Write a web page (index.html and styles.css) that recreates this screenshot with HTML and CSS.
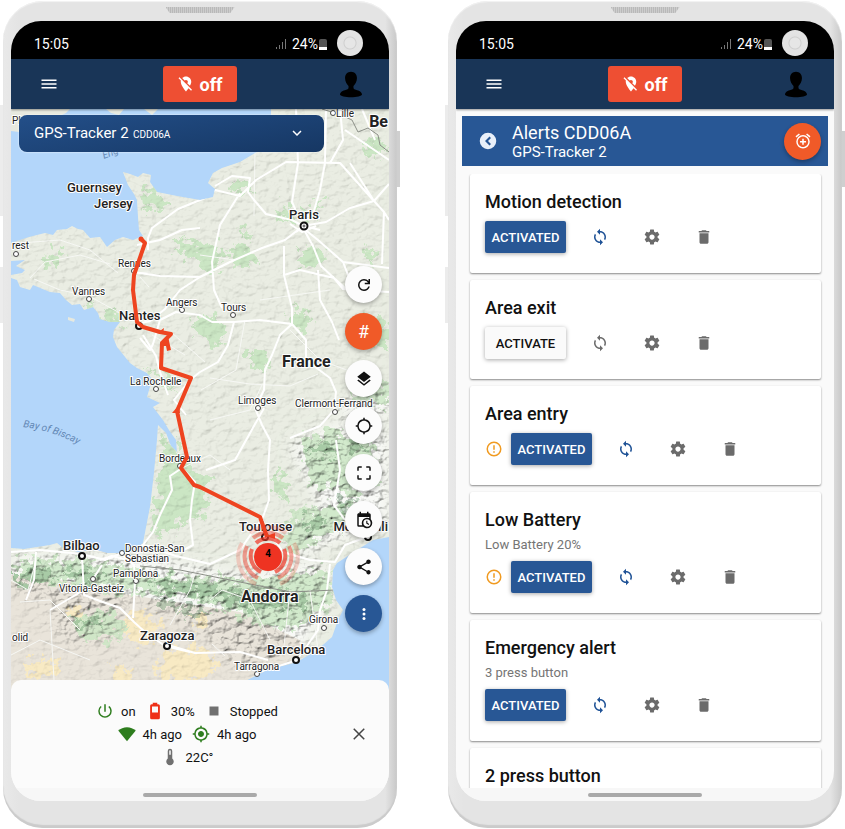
FILE: index.html
```html
<!doctype html>
<html lang="en">
<head>
    <meta charset="utf-8">
    <meta name="viewport" content="width=device-width, initial-scale=1">
    <title>GPS-Tracker</title>
    <link rel="stylesheet" href="styles.css">
</head>
<body>

<!-- icon sprite -->
<svg class="sprite" width="0" height="0" aria-hidden="true">
    <symbol id="i-menu" viewBox="0 0 24 24"><path d="M2 6h20v2H2zM2 11h20v2H2zM2 16h20v2H2z"/></symbol>
    <symbol id="i-location-off" viewBox="0 0 24 24"><path d="M12 6.500c1.380 0 2.500 1.120 2.500 2.500 0 .74-.33 1.390-.83 1.850l3.630 3.630c.98-1.860 1.700-3.800 1.700-5.480 0-3.870-3.130-7-7-7-1.980 0-3.760.83-5.040 2.150l3.190 3.190c.46-.52 1.110-.84 1.850-.84zm4.370 9.600l-4.630-4.630-.11-.11L3.270 3 2 4.270l3.180 3.180C5.070 7.950 5 8.470 5 9c0 5.250 7 13 7 13s1.670-1.850 3.380-4.350L18.730 21 20 19.730l-3.630-3.630z"/></symbol>
    <symbol id="i-user" viewBox="0 0 24 28"><path d="M12 0c4 0 6.500 3 6.500 7 0 4-2 7-3.800 8.600v2c0 1 1 1.700 2.600 2.200C21 21 24 22.300 24 25c0 1.500-6 3-12 3S0 26.500 0 25c0-2.700 3-4 6.700-5.200 1.600-.5 2.600-1.200 2.600-2.200v-2C7.500 14 5.500 11 5.500 7c0-4 2.500-7 6.500-7z"/></symbol>
    <symbol id="i-signal" viewBox="0 0 12 12"><path d="M0 9h1v2H0zM3 7h1v4H3zM6 4h1v7H6zM9 1h1v10H9z"/></symbol>
    <symbol id="i-chevron" viewBox="0 0 24 24"><path d="M7.410 8.590L12 13.170l4.590-4.580L18 10l-6 6-6-6z"/></symbol>
    <symbol id="i-refresh" viewBox="0 0 24 24"><path d="M12 20q-3.350 0-5.675-2.325Q4 15.350 4 12q0-3.350 2.325-5.675Q8.650 4 12 4q1.725 0 3.300.713 1.575.712 2.700 2.037V4h2v7h-7V9h4.200q-.8-1.400-2.188-2.200Q13.625 6 12 6 9.500 6 7.750 7.750T6 12q0 2.500 1.750 4.250T12 18q1.925 0 3.475-1.100T17.650 14h2.100q-.7 2.650-2.850 4.325Q14.750 20 12 20Z"/></symbol>
    <symbol id="i-layers" viewBox="0 0 24 24"><path d="M11.990 18.540l-7.370-5.730L3 14.070l9 7 9-7-1.630-1.270-7.380 5.740zM12 16l7.360-5.730L21 9l-9-7-9 7 1.630 1.270L12 16z"/></symbol>
    <symbol id="i-search-pos" viewBox="0 0 24 24"><path d="M20.940 11A8.994 8.994 0 0 0 13 3.060V1h-2v2.060A8.994 8.994 0 0 0 3.060 11H1v2h2.060A8.994 8.994 0 0 0 11 20.940V23h2v-2.060A8.994 8.994 0 0 0 20.940 13H23v-2h-2.060zM12 19c-3.870 0-7-3.130-7-7s3.130-7 7-7 7 3.130 7 7-3.130 7-7 7z"/></symbol>
    <symbol id="i-expand" viewBox="0 0 24 24"><path d="M3 9V5q0-2 2-2h4v2H5v4zM15 3h4q2 0 2 2v4h-2V5h-4zM3 15h2v4h4v2H5q-2 0-2-2zM19 15h2v4q0 2-2 2h-4v-2h4z"/></symbol>
    <symbol id="i-calendar" viewBox="0 0 24 24"><path d="M15 13h1.500v2.820l2.440 1.410-.75 1.300L15 16.690V13m4-5H5v11h4.670c-.43-.91-.67-1.930-.67-3a7 7 0 0 1 7-7c1.070 0 2.090.24 3 .67V8M5 21a2 2 0 0 1-2-2V5c0-1.110.89-2 2-2h1V1h2v2h8V1h2v2h1a2 2 0 0 1 2 2v6.100c1.240 1.260 2 2.990 2 4.900a7 7 0 0 1-7 7c-1.910 0-3.640-.76-4.900-2H5m11-9.850A4.850 4.850 0 0 0 11.150 16c0 2.680 2.170 4.850 4.850 4.850A4.850 4.850 0 0 0 20.850 16c0-2.680-2.170-4.850-4.850-4.850z"/></symbol>
    <symbol id="i-share" viewBox="0 0 24 24"><path d="M18 16.080c-.76 0-1.440.3-1.960.77L8.910 12.700c.05-.23.09-.46.09-.7s-.04-.47-.09-.7l7.050-4.110c.54.5 1.250.81 2.040.81 1.660 0 3-1.340 3-3s-1.340-3-3-3-3 1.340-3 3c0 .24.04.47.09.7L8.040 9.810C7.500 9.310 6.790 9 6 9c-1.660 0-3 1.340-3 3s1.340 3 3 3c.79 0 1.500-.31 2.040-.81l7.120 4.160c-.05.21-.08.43-.08.65 0 1.610 1.310 2.920 2.920 2.920s2.920-1.310 2.920-2.920-1.310-2.920-2.920-2.920z"/></symbol>
    <symbol id="i-more" viewBox="0 0 24 24"><circle cx="12" cy="6" r="2"/><circle cx="12" cy="12" r="2"/><circle cx="12" cy="18" r="2"/></symbol>
    <symbol id="i-power" viewBox="0 0 24 24"><path d="M13 3h-2v10h2V3zm4.830 2.170l-1.420 1.420A6.920 6.920 0 0 1 19 12c0 3.870-3.130 7-7 7s-7-3.130-7-7c0-2.190 1.010-4.140 2.580-5.420L6.170 5.170A8.932 8.932 0 0 0 3 12a9 9 0 0 0 18 0c0-2.740-1.230-5.180-3.170-6.830z"/></symbol>
    <symbol id="i-battery" viewBox="0 0 24 24"><path fill-rule="evenodd" d="M9 1h6v2h1.500Q18.500 3 18.500 5v16q0 2-2 2h-9q-2 0-2-2V5q0-2 2-2H9zM8 6v8h8V6z"/></symbol>
    <symbol id="i-stop" viewBox="0 0 24 24"><path d="M6 6h12v12H6z"/></symbol>
    <symbol id="i-wifi" viewBox="0 0 24 24"><path d="M12 3C7.500 3 3.400 4.700.3 7.300L12 21.500 23.700 7.300C20.600 4.700 16.500 3 12 3z"/></symbol>
    <symbol id="i-gps" viewBox="0 0 24 24"><path d="M12 8c-2.210 0-4 1.790-4 4s1.790 4 4 4 4-1.790 4-4-1.790-4-4-4zm8.940 3A8.994 8.994 0 0 0 13 3.060V1h-2v2.060A8.994 8.994 0 0 0 3.060 11H1v2h2.060A8.994 8.994 0 0 0 11 20.940V23h2v-2.060A8.994 8.994 0 0 0 20.940 13H23v-2h-2.060zM12 19c-3.870 0-7-3.130-7-7s3.130-7 7-7 7 3.130 7 7-3.130 7-7 7z"/></symbol>
    <symbol id="i-thermo" viewBox="0 0 24 24"><path fill-rule="evenodd" d="M15 14V4a3 3 0 0 0-6 0v10a5 5 0 1 0 6 0zM11 9V4a1 1 0 0 1 2 0v5z"/></symbol>
    <symbol id="i-close" viewBox="0 0 24 24"><path d="M5 5l14 14M19 5L5 19" fill="none" stroke="currentColor" stroke-width="2"/></symbol>
    <symbol id="i-back" viewBox="0 0 24 24"><path fill-rule="evenodd" d="M12 1a11 11 0 1 0 0 22 11 11 0 0 0 0-22zM14 6l2 2-4 4 4 4-2 2-6-6z"/></symbol>
    <symbol id="i-alarm-add" viewBox="0 0 24 24"><path d="M7.880 3.390L6.600 1.860 2 5.710l1.290 1.530 4.590-3.850zM22 5.720l-4.600-3.860-1.290 1.530 4.600 3.860L22 5.720zM12 4a9 9 0 1 0 0 18 9 9 0 0 0 0-18zm0 16c-3.870 0-7-3.130-7-7s3.130-7 7-7 7 3.130 7 7-3.130 7-7 7zm1-11h-2v3H8v2h3v3h2v-3h3v-2h-3V9z"/></symbol>
    <symbol id="i-sync" viewBox="0 0 24 24"><path d="M12 4V1L8 5l4 4V6c3.310 0 6 2.690 6 6 0 1.010-.25 1.970-.7 2.800l1.460 1.460A7.930 7.930 0 0 0 20 12c0-4.420-3.580-8-8-8zm0 14c-3.310 0-6-2.690-6-6 0-1.010.25-1.970.7-2.800L5.240 7.740A7.930 7.930 0 0 0 4 12c0 4.420 3.580 8 8 8v3l4-4-4-4v3z"/></symbol>
    <symbol id="i-settings" viewBox="0 0 24 24"><path d="M19.430 12.980c.04-.32.07-.64.07-.98s-.03-.66-.07-.98l2.110-1.650c.19-.15.24-.42.12-.64l-2-3.460c-.12-.22-.39-.3-.61-.22l-2.490 1c-.52-.4-1.080-.73-1.690-.98l-.38-2.650C14.460 2.180 14.250 2 14 2h-4c-.25 0-.46.18-.49.42l-.38 2.650c-.61.25-1.170.59-1.690.98l-2.490-1c-.23-.09-.49 0-.61.22l-2 3.460c-.13.22-.07.49.12.64l2.110 1.650c-.04.32-.07.65-.07.98s.03.66.07.98l-2.110 1.650c-.19.15-.24.42-.12.64l2 3.460c.12.22.39.3.61.22l2.490-1c.52.4 1.080.73 1.690.98l.38 2.650c.03.24.24.42.49.42h4c.25 0 .46-.18.49-.42l.38-2.650c.61-.25 1.170-.59 1.690-.98l2.490 1c.23.09.49 0 .61-.22l2-3.460c.12-.22.07-.49-.12-.64l-2.110-1.650zM12 15.500c-1.930 0-3.500-1.570-3.500-3.500s1.570-3.500 3.500-3.500 3.500 1.570 3.500 3.500-1.570 3.500-3.500 3.500z"/></symbol>
    <symbol id="i-delete" viewBox="0 0 24 24"><path d="M6 19c0 1.100.9 2 2 2h8c1.100 0 2-.9 2-2V7H6v12zM19 4h-3.500l-1-1h-5l-1 1H5v2h14V4z"/></symbol>
    <symbol id="i-warning" viewBox="0 0 24 24"><path d="M11 15h2v2h-2zm0-8h2v6h-2zm1-5a10 10 0 1 0 0 20 10 10 0 0 0 0-20zm0 18a8 8 0 1 1 0-16 8 8 0 0 1 0 16z"/></symbol>
</svg>

<main class="phones">

    <!-- map view -->
    <section class="phone">
        <div class="speaker"></div>
        <div class="screen">
            <div class="statusbar">
                <span>15:05</span>
                <svg class="signal"><use href="#i-signal"/></svg>
                <span>24%</span>
                <span class="cell"></span>
                <span class="camera"></span>
            </div>
            <header class="topbar">
                <button class="bar-btn" aria-label="Menu"><svg class="icon"><use href="#i-menu"/></svg></button>
                <button class="off-btn"><svg class="icon"><use href="#i-location-off"/></svg>off</button>
                <button class="bar-btn bar-user" aria-label="Account"><svg class="user"><use href="#i-user"/></svg></button>
            </header>

            <div class="map">
                <svg class="map-canvas" viewBox="11 109 378 581" preserveAspectRatio="xMidYMid slice">
                    <defs>
                        <filter id="relief" x="0" y="0" width="100%" height="100%">
                            <feTurbulence type="fractalNoise" baseFrequency=".11 .16" numOctaves="4" seed="8" result="n"/>
                            <feDiffuseLighting in="n" surfaceScale="5" diffuseConstant="1.200" lighting-color="#fff" result="l"><feDistantLight azimuth="225" elevation="56"/></feDiffuseLighting>
                            <feGaussianBlur in="SourceGraphic" stdDeviation="7" result="s"/>
                            <feComposite in="l" in2="s" operator="in"/>
                        </filter>
                        <filter id="patchy" x="-10%" y="-10%" width="120%" height="120%">
                            <feTurbulence type="fractalNoise" baseFrequency=".12" numOctaves="4" seed="3"/>
                            <feDisplacementMap in="SourceGraphic" scale="28" xChannelSelector="R" yChannelSelector="G"/>
                        </filter>
                        <path id="land" d="M257 152L240 162 222 168 213 173 208 183 215 189 213 197 200 200 177 196 157 192 150 182 151 175 143 173 138 177 130 174 123 172 128 185 134 194 137 200 138 217 139 230 143 236 133 240 123 237 115 240 107 247 100 237 90 238 83 230 78 229 72 226 67 229 57 230 53 235 45 233 37 235 29 237 20 240 11 243V261L25 260 16 266 25 270 22 273 11 275V278L17 280 20 287 30 290 33 285 50 292 60 293 66 300 72 305 80 304 84 310 93 307 98 313 100 319 110 322 120 322 114 330 113 337 117 347 130 363 137 368 147 373 153 380 150 387 147 397 160 403 153 407 163 420 169 430 176 440 177 452 171 446 166 433 158 425 157 440 154 473 150 507 143 543 133 552 120 553 107 553 100 551 90 550 78 552 63 548 57 543 50 545 37 547 24 549 11 548V690H240L247 680 267 670 297 662 317 650 332 637 338 620 343 610 336 600 332 587 333 570 337 563 357 550 373 540 389 537V109H271V132L266 145Z"/>
                        <clipPath id="onland"><use href="#land"/></clipPath>
                        <path id="biscay" d="M23 427Q56 431 82 447"/>
                    </defs>

                    <rect x="11" y="109" width="378" height="581" fill="#b3d6fa"/>
                    <path fill="#e7e9df" d="M11 109H70L66 113 50 121 30 127 19 132 11 131ZM106 109H124L119 115 111 113ZM144 109H158L152 115ZM68 317L75 319 74 322 68 320Z"/>
                    <use href="#land" fill="#e7ebdf"/>

                    <g clip-path="url(#onland)">
                        <path fill="#e9e4da" d="M11 575L60 580 130 595 240 612 300 640 300 690H11Z"/>
                        <g fill="#f8eac4" filter="url(#patchy)">
                            <path d="M22 660h36v16H26zM122 618l26-6 14 16-18 18-20-10zM158 656l40-12 24 22-28 16-34-4zM66 604l16 5 4 14-18-5zM188 614l14-2 6 12-14 6zM112 664l16 3 3 14-16 3z"/>
                        </g>
                        <g fill="#cbe6c4" filter="url(#patchy)">
                            <path d="M164 438L186 458 208 482 204 515 156 536 152 534zM141 192l15-4 10 14-14 10-10-4zM174 240l28 2 10 12-20 4-18-8zM199 244l20 2 5 16-14 12-14-8zM226 248l22-3 8 20-20 3zM299 249l20-2 8 14-16 8-12-8zM278 208l26 2-2 12-20-4zM311 204l14-4-6 16-8-4zM232 180l20 4v10l-22-4zM192 318l24-2 12 14-10 14-22-10zM249 350l18 2-2 20-16-6zM292 306l18 6-6 22-14-8zM49 252l14 2-8 16-14-8zM99 311h18l10 10-20 4zM84 300l12 4-4 8zM144 370l24 6 8 14-14-4zM364 247l14 8-10 10zM362 142l14-4 14 12-14 10zM274 470l14 4-4 26-10-6zM234 234l10-8 4 10zM366 316l24 8v24l-22-4z"/>
                            <path d="M14 560L104 562 154 574 244 580 330 570 334 600 294 630 264 625 184 594 104 590 14 580zM66 618l40-6 24 14-20 16-30-6zM300 440l30-10 44 12 6 40-30 10-40-8zM296 510l44-6 30 10-30 16-44 22-14-8zM350 392l39-14v26l-30 4zM300 590l26-4-4 26-20 4z" opacity=".85"/>
                        </g>
                        <g fill="#4f8a58" opacity=".32" filter="url(#patchy)">
                            <path d="M14 572l30-4 14 8-20 8-24 0zM60 570l36-2 10 10-40 4zM148 576l50 8 60 10 42 2 14 8-54 6-60-14-50-8zM158 596l24 8 30 6-10 8-40-12zM72 620l26-2 10 10-30-4zM306 446l24-6 10 12-26 6zM336 500l20-4 8 8-24 8zM300 520l20-4 6 8-22 6zM350 436l18 4-4 14-14-6z"/>
                        </g>
                        <path d="M11 556H140L240 574 320 562 330 600 300 650 240 670 200 630 130 595 110 640 60 640 50 600 11 590ZM290 445L330 425 389 430V530L350 535 300 555 285 535 320 505ZM340 405L389 380V420L345 420Z" fill="#fff" filter="url(#relief)" style="mix-blend-mode:multiply" opacity=".7"/>
                        <rect x="11" y="109" width="378" height="581" fill="#fff" filter="url(#relief)" style="mix-blend-mode:multiply" opacity=".14"/>

                        <g class="road-minor">
                            <path d="M20 243L60 240 90 250 118 273M30 278L45 262 80 255 110 264M34 279L60 290 89 296 118 312 137 322M133 273L150 272M140 277L149 287M254 216L255 150M201 390L236 370 245 320M210 378L250 384 290 386 318 374M290 330L320 360 360 375M340 400L389 407M262 385L250 410 210 420M230 470L210 455 182 468M80 630L50 600 20 602M50 610L54 680M11 655L40 640 90 660M210 600L222 590 250 600 270 640M212 644L225 656M170 625L190 590 196 570M260 300L330 290M235 260L200 255M152 335L185 355M172 333L205 362M11 580L28 590 36 560M290 590L283 655M310 590L318 650"/>
                        </g>
                        <g class="road">
                            <path d="M148 250V238L152 228 178 209 205 198 215 190 240 196 256 180 286 162 340 163 374 201 389 184M215 186L232 176 250 178 248 192 254 200 266 214 292 220 303 226 326 222 350 208 374 201 384 212 382 264M240 193L220 225 212 262 214 290 222 308M303 226L285 240 262 248 230 262 200 277 180 290 165 309 150 321 137 324M303 228L313 246 321 266 334 278 343 289 389 292M303 228L318 240 343 262 389 268M300 220L292 202 298 163 296 109M312 218L320 190 325 163 326 109M284 246L284 275 292 308 292 324 280 335 272 355 265 370 264 390 255 408 262 425 270 440 268 470 269 500 263 517M133 272L160 276 200 277M137 245L160 240 182 230 200 228M284 275L300 270 334 278 345 288M318 270L320 300 332 322 339 340M234 322L260 320 292 324 306 340 306 360 330 378 336 392 334 410 320 426 290 438M234 322L228 345 218 362 200 372 190 380 174 400 186 415M234 322L224 322 212 322 200 315 176 312 160 320 153 344 150 350 140 338M143 335L156 356 160 372 168 395M182 468L170 476 172 490 160 515 153 532 143 545 122 553M182 468L195 482 192 500 190 520 193 545 180 552 143 545M264 408L235 460 206 470M263 517L240 550 210 564 176 556 143 545M268 530L283 552 310 560 335 562 345 545 372 535M330 564L327 590 320 610 318 630 297 660 262 672M336 440L340 470 334 505 345 520M350 163L374 201M340 109L343 140 330 163M362 109L375 140M345 130L389 160M389 220L384 212M343 262L350 280"/>
                            <path d="M11 552L40 550 82 554 105 560 122 553M82 556L84 595 100 601 120 608 134 622 145 632 165 646 190 652M84 590L50 610M93 579L102 565M120 553L134 565 135 582 133 618M168 645L195 653 240 652 268 660M36 552L34 580 26 600M100 560L112 556 128 560"/>
                            <path d="M300 216h9v-6M290 224l12 8 14-6M296 232l8-6 16 4M300 220l20-2"/>
                        </g>
                        <path d="M341 115L352 120 358 132 368 128 378 135 380 145 389 152M322 109L338 114M140 566L180 570 220 578 260 586 290 592 335 590" fill="none" stroke="#8c8f88" stroke-width="1"/>
                    </g>

                    <g class="sea-name">
                        <text transform="translate(104 159) rotate(-22)">Eng</text>
                        <text><textPath href="#biscay">Bay of Biscay</textPath></text>
                    </g>

                    <g class="dots">
                        <circle cx="333" cy="113" r="2.500"/><circle cx="16" cy="254" r="2.500"/><circle cx="89" cy="299" r="2.500"/><circle cx="134" cy="271" r="2.500"/>
                        <circle cx="182" cy="310" r="2.500"/><circle cx="156" cy="389" r="2.500"/><circle cx="233" cy="315" r="2.500"/><circle cx="258" cy="408" r="2.500"/>
                        <circle cx="335" cy="412" r="2.500"/><circle cx="180" cy="466" r="2.500"/><circle cx="122" cy="553" r="2.500"/><circle cx="93" cy="579" r="2.500"/>
                        <circle cx="136" cy="581" r="2.500"/><circle cx="324" cy="628" r="2.500"/><circle cx="257" cy="674" r="2.500"/>
                        <g class="dots-big"><circle cx="139" cy="326" r="3"/><circle cx="82" cy="556" r="3"/><circle cx="167" cy="646" r="3"/><circle cx="296" cy="660" r="3"/><circle cx="265" cy="537" r="3"/><circle cx="368" cy="537" r="3"/><circle cx="304" cy="226" r="3.500"/></g>
                        <circle cx="304" cy="226" r="1"/>
                    </g>

                    <g class="town">
                        <text x="336" y="117">Lille</text>
                        <text x="12" y="124">Pl</text>
                        <text x="12" y="249">rest</text>
                        <text x="118" y="267">Rennes</text>
                        <text x="72" y="295">Vannes</text>
                        <text x="166" y="306">Angers</text>
                        <text x="221" y="311">Tours</text>
                        <text x="130" y="385">La Rochelle</text>
                        <text x="238" y="404">Limoges</text>
                        <text x="295" y="407">Clermont-Ferrand</text>
                        <text x="159" y="462">Bordeaux</text>
                        <text x="125" y="552">Donostia-San</text>
                        <text x="125" y="562">Sebastian</text>
                        <text x="113" y="577">Pamplona</text>
                        <text x="59" y="592">Vitoria-Gasteiz</text>
                        <text x="12" y="641">olid</text>
                        <text x="309" y="623">Girona</text>
                        <text x="234" y="670">Tarragona</text>
                    </g>
                    <g class="city">
                        <text x="289" y="219">Paris</text>
                        <text x="67" y="192">Guernsey</text>
                        <text x="94" y="208">Jersey</text>
                        <text x="119" y="320">Nantes</text>
                        <text x="239" y="531">Toulouse</text>
                        <text x="388" y="531" text-anchor="end">Montpelli</text>
                        <text x="63" y="550">Bilbao</text>
                        <text x="140" y="640">Zaragoza</text>
                        <text x="267" y="654">Barcelona</text>
                    </g>
                    <g class="country">
                        <text x="388" y="127" text-anchor="end">Be</text>
                        <text x="282" y="367">France</text>
                        <text x="241" y="602">Andorra</text>
                    </g>

                    <!-- driven route -->
                    <path class="route" d="M141 239L145 243 134 275 133 290 137 322 143 327 160 332 171 334 162 343 161 368 191 378 177 411 187 457 181 468 194 485 200 487 260 517 267 537"/>
                    <path fill="#ee4420" d="M157 333l7-5-1 6zM160 346l8-10 3 14-4 1-1-5zM172 413l7-8 1 8zM266 536l9-3v6z"/>
                    <circle cx="141" cy="239" r="2.500" fill="#ee4420"/>

                    <!-- cluster marker -->
                    <g fill="none" stroke="#ee3524" stroke-width="4">
                        <path opacity=".7" d="M256 543A18 18 0 0 1 280 543M284 549A18 18 0 0 1 275 572M252 549A18 18 0 0 0 261 572"/>
                        <path opacity=".45" d="M253 538A24 24 0 0 1 283 538M289 546A24 24 0 0 1 278 578M247 546A24 24 0 0 0 258 578"/>
                        <path opacity=".2" d="M250 533A29 29 0 0 1 286 533M294 543A29 29 0 0 1 280 584M242 543A29 29 0 0 0 256 584"/>
                    </g>
                    <circle cx="268" cy="557" r="14" fill="#ee3322"/>
                    <text class="cluster-count" x="268" y="557">4</text>
                </svg>

                <label class="tracker">
                    <select aria-label="Tracker">
                        <option>GPS-Tracker 2</option>
                    </select>
                    <small>CDD06A</small>
                    <svg class="icon"><use href="#i-chevron"/></svg>
                </label>

                <div class="fabs">
                    <button class="fab" aria-label="Refresh"><svg class="icon"><use href="#i-refresh"/></svg></button>
                    <button class="fab fab-orange">#</button>
                    <button class="fab" aria-label="Layers"><svg class="icon"><use href="#i-layers"/></svg></button>
                    <button class="fab" aria-label="Position"><svg class="icon"><use href="#i-search-pos"/></svg></button>
                    <button class="fab" aria-label="Fit map"><svg class="icon"><use href="#i-expand"/></svg></button>
                    <button class="fab" aria-label="History"><svg class="icon"><use href="#i-calendar"/></svg></button>
                    <button class="fab" aria-label="Share"><svg class="icon"><use href="#i-share"/></svg></button>
                    <button class="fab fab-blue" aria-label="More"><svg class="icon"><use href="#i-more"/></svg></button>
                </div>
            </div>

            <div class="info">
                <div class="info-rows">
                    <div class="info-row">
                        <span class="stat green"><svg class="icon"><use href="#i-power"/></svg>on</span>
                        <span class="stat red"><svg class="icon"><use href="#i-battery"/></svg>30%</span>
                        <span class="stat"><svg class="icon"><use href="#i-stop"/></svg>Stopped</span>
                    </div>
                    <div class="info-row">
                        <span class="stat green"><svg class="icon"><use href="#i-wifi"/></svg>4h ago</span>
                        <span class="stat green"><svg class="icon"><use href="#i-gps"/></svg>4h ago</span>
                    </div>
                    <div class="info-row">
                        <span class="stat"><svg class="icon"><use href="#i-thermo"/></svg>22C°</span>
                    </div>
                </div>
                <button class="close" aria-label="Close"><svg class="icon"><use href="#i-close"/></svg></button>
            </div>
            <div class="homebar"></div>
        </div>
    </section>

    <!-- alerts view -->
    <section class="phone">
        <div class="speaker"></div>
        <div class="screen">
            <div class="statusbar">
                <span>15:05</span>
                <svg class="signal"><use href="#i-signal"/></svg>
                <span>24%</span>
                <span class="cell"></span>
                <span class="camera"></span>
            </div>
            <header class="topbar">
                <button class="bar-btn" aria-label="Menu"><svg class="icon"><use href="#i-menu"/></svg></button>
                <button class="off-btn"><svg class="icon"><use href="#i-location-off"/></svg>off</button>
                <button class="bar-btn bar-user" aria-label="Account"><svg class="user"><use href="#i-user"/></svg></button>
            </header>

            <div class="alerts-head">
                <button class="back" aria-label="Back"><svg class="icon"><use href="#i-back"/></svg></button>
                <div class="alerts-title">
                    <h1>Alerts CDD06A</h1>
                    <p>GPS-Tracker 2</p>
                </div>
                <button class="fab fab-orange" aria-label="Add alert"><svg class="icon"><use href="#i-alarm-add"/></svg></button>
            </div>

            <div class="alerts">
                <article class="card">
                    <h2>Motion detection</h2>
                    <div class="actions">
                        <button class="toggle on">ACTIVATED</button>
                        <button class="act blue" aria-label="Sync"><svg class="icon"><use href="#i-sync"/></svg></button>
                        <button class="act" aria-label="Settings"><svg class="icon"><use href="#i-settings"/></svg></button>
                        <button class="act" aria-label="Delete"><svg class="icon"><use href="#i-delete"/></svg></button>
                    </div>
                </article>
                <article class="card">
                    <h2>Area exit</h2>
                    <div class="actions">
                        <button class="toggle">ACTIVATE</button>
                        <button class="act" aria-label="Sync"><svg class="icon"><use href="#i-sync"/></svg></button>
                        <button class="act" aria-label="Settings"><svg class="icon"><use href="#i-settings"/></svg></button>
                        <button class="act" aria-label="Delete"><svg class="icon"><use href="#i-delete"/></svg></button>
                    </div>
                </article>
                <article class="card">
                    <h2>Area entry</h2>
                    <div class="actions">
                        <svg class="icon warn"><use href="#i-warning"/></svg>
                        <button class="toggle on">ACTIVATED</button>
                        <button class="act blue" aria-label="Sync"><svg class="icon"><use href="#i-sync"/></svg></button>
                        <button class="act" aria-label="Settings"><svg class="icon"><use href="#i-settings"/></svg></button>
                        <button class="act" aria-label="Delete"><svg class="icon"><use href="#i-delete"/></svg></button>
                    </div>
                </article>
                <article class="card">
                    <h2>Low Battery</h2>
                    <p>Low Battery 20%</p>
                    <div class="actions">
                        <svg class="icon warn"><use href="#i-warning"/></svg>
                        <button class="toggle on">ACTIVATED</button>
                        <button class="act blue" aria-label="Sync"><svg class="icon"><use href="#i-sync"/></svg></button>
                        <button class="act" aria-label="Settings"><svg class="icon"><use href="#i-settings"/></svg></button>
                        <button class="act" aria-label="Delete"><svg class="icon"><use href="#i-delete"/></svg></button>
                    </div>
                </article>
                <article class="card">
                    <h2>Emergency alert</h2>
                    <p>3 press button</p>
                    <div class="actions">
                        <button class="toggle on">ACTIVATED</button>
                        <button class="act blue" aria-label="Sync"><svg class="icon"><use href="#i-sync"/></svg></button>
                        <button class="act" aria-label="Settings"><svg class="icon"><use href="#i-settings"/></svg></button>
                        <button class="act" aria-label="Delete"><svg class="icon"><use href="#i-delete"/></svg></button>
                    </div>
                </article>
                <article class="card">
                    <h2>2 press button</h2>
                </article>
            </div>
            <div class="homebar"></div>
        </div>
    </section>

</main>

</body>
</html>
```

FILE: styles.css
```css
* {
    box-sizing: border-box;
}
body {
    margin: 0;
    background-color: #fff;
    font-family: Roboto, sans-serif;
    color: #111;
}
button {
    padding: 0;
    border: none;
    background: none;
    font-family: inherit;
    color: inherit;
    cursor: pointer;
}
h1, h2, p {
    margin: 0;
    font-weight: 400;
}
.sprite {
    position: absolute;
}
.icon {
    display: block;
    flex: none;
    width: 18px;
    height: 18px;
    fill: currentColor;
}

/* phone frame */
.phones {
    display: grid;
    grid-template-columns: 1fr 1fr;
    gap: 51px;
    padding: 1px 3px;
    height: 100vh;
}
.phone {
    position: relative;
    display: flex;
    flex-direction: column;
    min-width: 0;
    min-height: 0;
    padding: 6px 8px 27px;
    border-radius: 40px;
    background: linear-gradient(90deg, #e9e9e9 0, #e4e4e4 4%, #e4e4e4 97%, #c8c8c8 100%);
    box-shadow: inset 0 -3px 1px #cbcbcb, inset 0 1px 1px #f3f3f3;
}
.phone::before {
    content: "";
    position: absolute;
    left: -3px;
    top: 104px;
    width: 3px;
    height: 218px;
    background: linear-gradient(#ececec 0 111px, transparent 111px 162px, #ececec 162px);
}
.phone::after {
    content: "";
    position: absolute;
    right: -3px;
    top: 130px;
    width: 3px;
    height: 56px;
    background-color: #cfcfcf;
}
.speaker {
    align-self: center;
    flex: none;
    width: 69px;
    height: 6px;
    margin-bottom: 8px;
    background: repeating-linear-gradient(90deg, #b9b9b9 0 1px, #cdcdcd 1px 2px);
    clip-path: polygon(0 0, 100% 0, 94% 100%, 6% 100%);
}
.screen {
    display: flex;
    flex: 1;
    flex-direction: column;
    min-height: 0;
    overflow: hidden;
    border-radius: 30px;
    background-color: #fafafa;
}
.statusbar {
    display: flex;
    flex: none;
    align-items: center;
    height: 38px;
    padding: 8px 26px 0 23px;
    background-color: #000;
    color: #fff;
    font-size: 14px;
}
.signal {
    width: 12px;
    height: 12px;
    margin-left: auto;
    margin-right: 4px;
    fill: #777;
}
.cell {
    width: 8px;
    height: 11px;
    margin: 0 10px 0 1px;
    border-radius: 2px 2px 0 0;
    background: linear-gradient(#555 0 8px, #fff 8px);
}
.camera {
    width: 26px;
    height: 26px;
    margin-top: -2px;
    border-radius: 50%;
    background: radial-gradient(#e6e6e6 0 5px, #cfcfcf 6px, #e2e2e2 7px, #e6e6e6);
}
.topbar {
    z-index: 1;
    display: flex;
    flex: none;
    align-items: center;
    justify-content: space-between;
    height: 50px;
    padding: 0 27px;
    background-color: #193557;
    box-shadow: 0 1px 2px rgba(0, 0, 0, 0.4);
    color: #fff;
}
.bar-btn {
    display: flex;
    justify-content: center;
    width: 22px;
}
.bar-user {
    color: #000;
}
.user {
    width: 22px;
    height: 27px;
    fill: currentColor;
}
.off-btn {
    display: flex;
    align-items: center;
    justify-content: center;
    gap: 4px;
    width: 74px;
    height: 36px;
    border-radius: 3px;
    background-color: #ee4f33;
    font-size: 18px;
    font-weight: 700;
}

/* map */
.map {
    position: relative;
    flex: 1;
    min-height: 0;
}
.map-canvas {
    display: block;
    width: 100%;
    height: 100%;
}
.map-canvas text {
    fill: #222;
    stroke: #fff;
    stroke-width: 2px;
    stroke-linejoin: round;
    paint-order: stroke;
}
.town {
    font-size: 10px;
}
.city {
    font-size: 13px;
    font-weight: 500;
}
.country {
    font-size: 16px;
    font-weight: 700;
}
.map-canvas .sea-name text {
    fill: #6388b5;
    stroke: none;
    font-size: 10px;
    font-style: italic;
}
.map-canvas .cluster-count {
    fill: #000;
    stroke: none;
    font-size: 10px;
    font-weight: 700;
    text-anchor: middle;
}
.road {
    fill: none;
    stroke: #fff;
    stroke-width: 2px;
    stroke-linejoin: round;
}
.road-minor {
    fill: none;
    stroke: #f6f7f4;
    stroke-width: 1px;
}
.dots {
    fill: #fff;
    stroke: #444;
    stroke-width: 1px;
}
.dots-big {
    stroke: #111;
    stroke-width: 2px;
}
.route {
    fill: none;
    stroke: #ee4420;
    stroke-width: 4px;
    stroke-linejoin: round;
}
.tracker {
    position: absolute;
    left: 8px;
    right: 65px;
    top: 6px;
    display: flex;
    align-items: center;
    height: 37px;
    padding: 0 18px 2px 15px;
    border-radius: 8px;
    background: linear-gradient(170deg, #234f89, #163763);
    box-shadow: 0 0 2px #fff;
    color: #fff;
}
.tracker select {
    appearance: none;
    padding: 0;
    border: none;
    background: none;
    color: inherit;
    font-family: inherit;
    font-size: 15px;
}
.tracker small {
    padding: 4px 0 0 4px;
    font-size: 10px;
}
.tracker .icon {
    margin-left: auto;
}
.fabs {
    position: absolute;
    right: 7px;
    top: 157px;
    display: grid;
    gap: 10px;
}
.fab {
    display: flex;
    flex: none;
    align-items: center;
    justify-content: center;
    width: 37px;
    height: 37px;
    border-radius: 50%;
    background-color: #fcfcfc;
    box-shadow: 0 2px 4px rgba(0, 0, 0, 0.3);
    font-size: 18px;
}
.fab-orange {
    background-color: #f05a28;
    color: #fff;
}
.fab-blue {
    background-color: #285795;
    color: #fff;
}

/* tracker info */
.info {
    position: relative;
    display: flex;
    flex: none;
    align-items: center;
    height: 108px;
    margin-top: -10px;
    padding-left: 34px;
    border-radius: 10px 10px 0 0;
    background-color: #fbfbfb;
}
.info-rows {
    flex: 1;
    font-size: 13px;
    line-height: 23px;
}
.info-row {
    display: flex;
    justify-content: center;
    gap: 10px;
}
.stat {
    display: flex;
    align-items: center;
    gap: 7px;
}
.stat .icon {
    color: #707070;
}
.green .icon {
    color: #2e7d1e;
}
.red .icon {
    color: #ee3018;
}
.close {
    display: flex;
    justify-content: center;
    width: 60px;
    color: #444;
}
.homebar {
    display: flex;
    flex: none;
    align-items: center;
    justify-content: center;
    height: 13px;
    background-color: #f7f7f7;
}
.homebar::before {
    content: "";
    width: 30%;
    height: 4px;
    border-radius: 2px;
    background-color: #a9a9a9;
}

/* alerts */
.alerts-head {
    display: flex;
    flex: none;
    align-items: center;
    height: 50px;
    margin: 7px 6px 8px;
    padding: 0 7px 0 17px;
    background-color: #285795;
    color: #fff;
}
.back {
    color: #e9f0fa;
}
.alerts-title {
    flex: 1;
    padding-left: 15px;
}
.alerts-title h1 {
    font-size: 18px;
    line-height: 21px;
}
.alerts-title p {
    font-size: 15px;
    line-height: 18px;
}
.alerts {
    display: flex;
    flex: 1;
    flex-direction: column;
    gap: 7px;
    min-height: 0;
    padding: 0 13px 0 14px;
    overflow-y: auto;
    scrollbar-width: none;
}
.card {
    flex: none;
    padding: 16px 15px 20px;
    border-radius: 2px;
    background-color: #fff;
    box-shadow: 0 1px 2px rgba(0, 0, 0, 0.45);
}
.card h2 {
    font-size: 18px;
    font-weight: 500;
    line-height: 24px;
}
.card p {
    margin-top: 4px;
    color: #757575;
    font-size: 13px;
    line-height: 18px;
}
.actions {
    display: flex;
    align-items: center;
    margin-top: 7px;
}
.toggle {
    width: 81px;
    height: 32px;
    margin-right: 8px;
    border-radius: 2px;
    background-color: #fafafa;
    box-shadow: 0 1px 4px rgba(0, 0, 0, 0.35);
    font-size: 13px;
    font-weight: 500;
}
.toggle.on {
    background-color: #285795;
    color: #fff;
}
.act {
    display: flex;
    justify-content: center;
    width: 52px;
    color: #6b6b6b;
}
.blue {
    color: #1f5296;
}
.warn {
    margin-right: 8px;
    color: #f09a20;
}
```
